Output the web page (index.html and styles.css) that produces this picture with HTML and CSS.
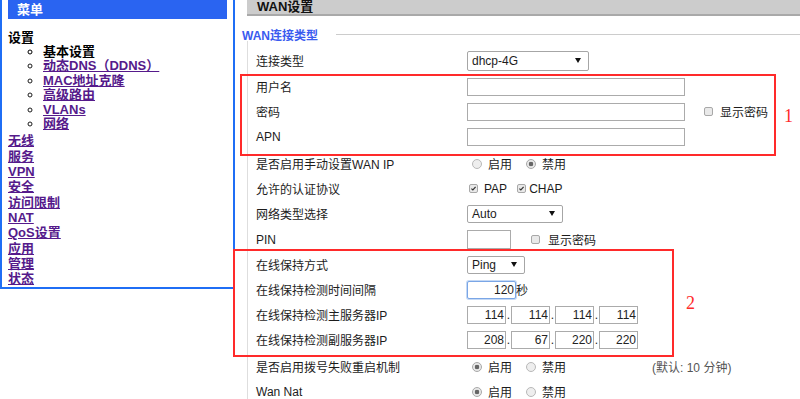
FILE: index.html
```html
<!DOCTYPE html>
<html lang="zh-CN">
<head>
    <meta charset="utf-8">
    <title>WAN设置</title>
    <link rel="stylesheet" href="styles.css">
</head>
<body>
<div class="page">
    <aside class="menu">
        <div class="menu-head">菜单</div>
        <div class="menu-body">
            <div class="menu-group">设置</div>
            <ul class="menu-sub">
                <li class="current">基本设置</li>
                <li><a href="#">动态DNS（DDNS）</a></li>
                <li><a href="#">MAC地址克隆</a></li>
                <li><a href="#">高级路由</a></li>
                <li><a href="#">VLANs</a></li>
                <li><a href="#">网络</a></li>
            </ul>
            <a class="menu-link first" href="#">无线</a>
            <a class="menu-link" href="#">服务</a>
            <a class="menu-link" href="#">VPN</a>
            <a class="menu-link" href="#">安全</a>
            <a class="menu-link" href="#">访问限制</a>
            <a class="menu-link" href="#">NAT</a>
            <a class="menu-link" href="#">QoS设置</a>
            <a class="menu-link" href="#">应用</a>
            <a class="menu-link" href="#">管理</a>
            <a class="menu-link" href="#">状态</a>
        </div>
    </aside>

    <main class="content">
        <div class="page-title">WAN设置</div>
        <div class="legend"><span>WAN连接类型</span><i class="legend-line"></i></div>

        <div class="fields">
            <div class="row">
                <span class="lbl">连接类型</span>
                <span class="select w-type">dhcp-4G<i class="arrow"></i></span>
            </div>
            <div class="row gap1">
                <span class="lbl">用户名</span>
                <input class="txt w-long" type="text">
            </div>
            <div class="row">
                <span class="lbl">密码</span>
                <input class="txt w-long" type="password">
                <span class="check pw-check"></span><span>显示密码</span>
            </div>
            <div class="row">
                <span class="lbl">APN</span>
                <input class="txt w-long" type="text">
            </div>
            <div class="row gap2">
                <span class="lbl">是否启用手动设置WAN IP</span>
                <span class="radio"></span><span class="opt">启用</span>
                <span class="radio on"></span><span class="opt">禁用</span>
            </div>
            <div class="row">
                <span class="lbl">允许的认证协议</span>
                <span class="check on first"><svg viewBox="0 0 9 9"><path d="M1.8 4.6 L3.7 6.4 L7.2 2.4"/></svg></span><span class="opt-c">PAP</span>
                <span class="check on"><svg viewBox="0 0 9 9"><path d="M1.8 4.6 L3.7 6.4 L7.2 2.4"/></svg></span><span class="opt-c">CHAP</span>
            </div>
            <div class="row">
                <span class="lbl">网络类型选择</span>
                <span class="select w-net">Auto<i class="arrow"></i></span>
            </div>
            <div class="row gap1">
                <span class="lbl">PIN</span>
                <input class="txt w-pin" type="text">
                <span class="check pin-check"></span><span>显示密码</span>
            </div>
            <div class="row">
                <span class="lbl">在线保持方式</span>
                <span class="select w-ping">Ping<i class="arrow"></i></span>
            </div>
            <div class="row">
                <span class="lbl">在线保持检测时间间隔</span>
                <input class="txt num w-sec focus" type="text" value="120"><span>秒</span>
            </div>
            <div class="row">
                <span class="lbl">在线保持检测主服务器IP</span>
                <input class="txt num w-ip" type="text" value="114"><span class="dot">.</span>
                <input class="txt num w-ip" type="text" value="114"><span class="dot">.</span>
                <input class="txt num w-ip" type="text" value="114"><span class="dot">.</span>
                <input class="txt num w-ip" type="text" value="114">
            </div>
            <div class="row">
                <span class="lbl">在线保持检测副服务器IP</span>
                <input class="txt num w-ip" type="text" value="208"><span class="dot">.</span>
                <input class="txt num w-ip" type="text" value="67"><span class="dot">.</span>
                <input class="txt num w-ip" type="text" value="220"><span class="dot">.</span>
                <input class="txt num w-ip" type="text" value="220">
            </div>
            <div class="row gap2">
                <span class="lbl">是否启用拨号失败重启机制</span>
                <span class="radio on"></span><span class="opt">启用</span>
                <span class="radio"></span><span class="opt">禁用</span>
                <span class="hint">(默认: 10 分钟)</span>
            </div>
            <div class="row">
                <span class="lbl">Wan Nat</span>
                <span class="radio on"></span><span class="opt">启用</span>
                <span class="radio"></span><span class="opt">禁用</span>
            </div>
        </div>
    </main>

    <div class="mark mark-1"></div>
    <div class="mark mark-2"></div>
    <span class="mark-num num-1">1</span>
    <span class="mark-num num-2">2</span>
</div>
</body>
</html>
```

FILE: styles.css
```css
* {
    box-sizing: border-box;
}
body {
    margin: 0;
    background: #fff;
    color: #1c1c1c;
    font-family: "Liberation Sans", "Noto Sans CJK SC", sans-serif;
    font-size: 12px;
}
.page {
    position: relative;
    display: flex;
    align-items: flex-start;
    width: 800px;
    height: 399px;
    overflow: hidden;
}

/* left menu */
.menu {
    flex: none;
    width: 235px;
    height: 289px;
    border-left: 2px solid #1f6ef5;
    border-right: 2px solid #1f6ef5;
    border-bottom: 2px solid #1f6ef5;
    font-size: 13px;
    font-weight: bold;
}
.menu-head {
    margin-left: 6px;
    width: 219px;
    height: 19px;
    line-height: 19px;
    padding-left: 9px;
    background: #2a64f1;
    color: #fff;
}
.menu-body {
    padding: 11px 0 0 6px;
}
.menu-group {
    line-height: 15px;
    color: #000;
}
.menu-sub {
    margin: 0;
    padding-left: 35px;
    list-style: circle;
}
.menu-sub li {
    line-height: 14.4px;
}
.menu-sub .current {
    color: #000;
}
.menu-sub a,
.menu-link {
    color: #551a8b;
    text-decoration: underline;
}
.menu-link {
    display: block;
    width: fit-content;
    line-height: 15.3px;
}
.menu-link.first {
    margin-top: 2px;
}

/* right side */
.content {
    flex: 1;
}
.page-title {
    margin-left: 12px;
    height: 16px;
    line-height: 14px;
    padding-left: 10px;
    background: #ccc;
    border-bottom: 2px solid #a9a9a9;
    font-size: 13px;
    font-weight: bold;
    color: #111;
}
.legend {
    display: flex;
    align-items: center;
    height: 14px;
    margin: 11px 0 0 7px;
    font-weight: bold;
    color: #3a5bef;
}
.legend-line {
    flex: 1;
    margin-left: 18px;
    border-top: 1px solid #ccc;
}
.fields {
    margin-left: 12px;
    height: 360px;
    padding: 7px 0 0 8px;
    border-left: 1px solid #dedede;
}
.row {
    display: flex;
    align-items: center;
    height: 25px;
}
.gap1 {
    margin-top: 1px;
}
.gap2 {
    margin-top: 2px;
}
.lbl {
    flex: none;
    width: 211px;
}

/* controls */
.txt {
    height: 18px;
    margin: 0;
    padding: 0 2px;
    border: 1px solid #ababab;
    background: #fff;
    font: 12px "Liberation Sans", sans-serif;
    color: #222;
    outline: none;
}
.txt.num {
    text-align: right;
    padding-right: 1px;
}
.txt.focus {
    border-color: #7aa6e6;
    box-shadow: 0 0 0 1px #c5d9f5;
    border-radius: 2px;
}
.w-long { width: 218px; }
.w-pin { width: 44px; height: 19px; }
.w-sec { width: 49px; }
.w-ip { width: 39px; }
.dot {
    width: 5px;
    text-align: center;
}
.select {
    display: flex;
    align-items: center;
    justify-content: space-between;
    height: 18px;
    padding: 0 7px 0 4px;
    border: 1px solid #a6a6a6;
    border-radius: 2px;
    background: #fff;
}
.w-type { width: 122px; height: 20px; }
.w-net { width: 96px; }
.w-ping { width: 58px; }
.arrow {
    width: 0;
    height: 0;
    border-left: 3px solid transparent;
    border-right: 3px solid transparent;
    border-top: 5px solid #111;
}
.radio {
    width: 10px;
    height: 10px;
    margin: 0 6px 0 5px;
    border: 1px solid #b8b8b8;
    border-radius: 50%;
    background: #eee;
}
.radio.on {
    background: radial-gradient(circle, #666 0 2px, #e8e8e8 2.6px);
    border-color: #a8a8a8;
}
.opt + .radio {
    margin-left: 14px;
}
.check {
    width: 9px;
    height: 9px;
    border: 1px solid #a8a8a8;
    border-radius: 2px;
    background: #e9e9e9;
    margin-right: 6px;
}
.check svg {
    display: block;
    width: 7px;
    height: 7px;
}
.check path {
    fill: none;
    stroke: #333;
    stroke-width: 1.5;
}
.check.first {
    margin-left: 2px;
}
.opt-c + .check {
    margin-left: 10px;
    margin-right: 3px;
}
.pw-check {
    margin-left: 19px;
    margin-right: 7px;
}
.pin-check {
    margin-left: 20px;
    margin-right: 8px;
}
.hint {
    margin-left: 86px;
    color: #555;
}

/* red annotations drawn over the form */
.mark {
    position: absolute;
    border: 2px solid #ff2a2a;
}
.mark-1 {
    left: 240px;
    top: 74px;
    width: 536px;
    height: 82px;
}
.mark-2 {
    left: 233px;
    top: 249px;
    width: 441px;
    height: 108px;
}
.mark-num {
    position: absolute;
    font-family: "Liberation Serif", serif;
    font-size: 18px;
    line-height: 18px;
    color: #ff2a2a;
}
.num-1 {
    left: 784px;
    top: 107px;
}
.num-2 {
    left: 686px;
    top: 294px;
}
```
